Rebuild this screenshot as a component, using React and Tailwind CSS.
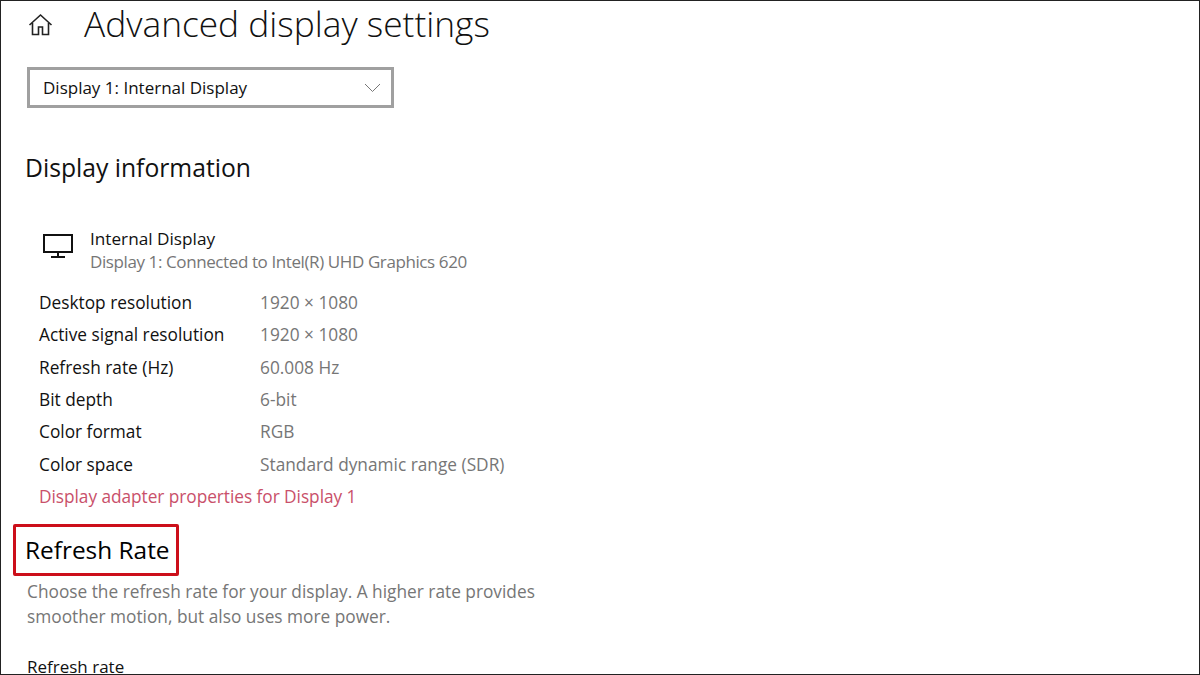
import React from 'react';

const rows = [
  ['Desktop resolution', '1920 × 1080'],
  ['Active signal resolution', '1920 × 1080'],
  ['Refresh rate (Hz)', '60.008 Hz'],
  ['Bit depth', '6-bit'],
  ['Color format', 'RGB'],
  ['Color space', 'Standard dynamic range (SDR)'],
];

const App = () => {
  return (
    <div className="w-[1200px] h-[675px] overflow-hidden bg-white border border-[#222] text-[#111] font-['Open_Sans',sans-serif]">
      {/* Title */}
      <div className="flex items-center h-[46px] pl-[27px]">
        <svg width="25" height="25" viewBox="0 0 25 25" fill="none" stroke="#222" strokeWidth="1.6">
          <path d="M1.5 13 12.5 3l11 10M4.5 11v11.5h6V15h4v7.5h6V11" />
        </svg>
        <div className="ml-[31px] pb-[2px] text-[35.3px] leading-[46px] font-light">Advanced display settings</div>
      </div>

      {/* Display select */}
      <div className="mt-[20px] ml-[26px] w-[367px] h-[41px] border-[3px] border-[#a0a0a0] flex items-center justify-between pl-[13px] pr-[10px] text-[17px]">
        <span className="pt-[1px]">Display 1: Internal Display</span>
        <svg width="17" height="10" viewBox="0 0 17 10" fill="none" stroke="#777" strokeWidth="1">
          <path d="M1 1l7.5 7.5L16 1" />
        </svg>
      </div>

      <div className="mt-[40px] ml-[24px] text-[24.7px] leading-[40px]">Display information</div>

      <div className="flex mt-[39px] ml-[41px]">
        <svg className="mt-[6px]" width="32" height="26" viewBox="0 0 32 26" fill="none" stroke="#111" strokeWidth="2">
          <path d="M2 2h28v17H2zM16 19v5M9 24h14" />
        </svg>
        <div className="ml-[16px] text-[17.2px] leading-[23px]">
          <div>Internal Display</div>
          <div className="text-[#767676] text-[17px] tracking-[-0.4px]">Display 1: Connected to Intel(R) UHD Graphics 620</div>
        </div>
      </div>

      <div className="mt-[14px] ml-[38px] text-[17.3px]">
        {rows.map(([label, value]) => (
          <div key={label} className="flex h-[32.3px] items-center">
            <div className="w-[221px]">{label}</div>
            <div className="text-[#767676]">{value}</div>
          </div>
        ))}
        <div className="h-[32.3px] flex items-center text-[#c9506a] tracking-[-0.05px]">Display adapter properties for Display 1</div>
      </div>

      {/* Refresh rate heading */}
      <div className="mt-[11px] ml-[12px] w-[166px] h-[52px] border-[3px] border-[#cc0f1a] rounded-[2px] flex items-center pl-[9px] text-[24.4px] text-black">
        Refresh Rate
      </div>

      <div className="mt-[3px] ml-[26px] text-[17.3px] leading-[25px] text-[#767676]">
        <div>Choose the refresh rate for your display. A higher rate provides</div>
        <div>smoother motion, but also uses more power.</div>
      </div>

      <div className="mt-[26px] ml-[26px] text-[17px] leading-[24px]">Refresh rate</div>
    </div>
  );
};

export default App;
